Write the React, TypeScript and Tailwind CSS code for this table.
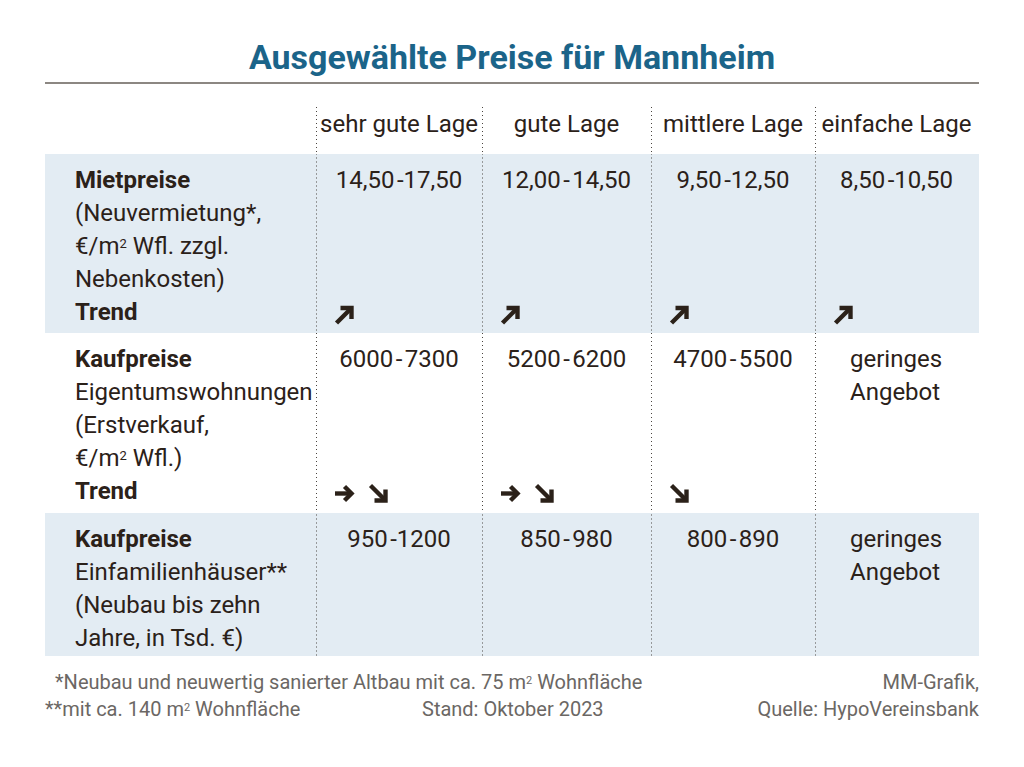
import React from "react";

type Dir = "ne" | "e" | "se";

function Arrow({ dir }: { dir: Dir }) {
  const paths: Record<Dir, { line: string; head: string }> = {
    ne: { line: "M2.5 19 L16.5 5", head: "M6.5 4 L17.5 4 L17.5 15" },
    e: { line: "M1 10.5 L17.5 10.5", head: "M10.5 3.5 L17.5 10.5 L10.5 17.5" },
    se: { line: "M2.5 2.5 L16.5 16.5", head: "M17.5 6.5 L17.5 17.5 L6.5 17.5" },
  };
  const p = paths[dir];
  return (
    <svg width="21" height="21" viewBox="0 0 21 21" fill="none" className="shrink-0">
      <path d={p.line} stroke="#2b2119" strokeWidth="4.4" />
      <path d={p.head} stroke="#2b2119" strokeWidth="4.4" strokeLinejoin="miter" />
    </svg>
  );
}

const dotted =
  "bg-[linear-gradient(to_bottom,#4a4540_1.4px,transparent_1.4px)] bg-[length:1.4px_4px] bg-repeat-y bg-left";

const columns = ["sehr gute Lage", "gute Lage", "mittlere Lage", "einfache Lage"];

type Cell = { value?: string; lines?: string[]; trend?: Dir[] };

type Row = {
  shaded: boolean;
  height: string;
  label: React.ReactNode;
  cells: Cell[];
};

const rows: Row[] = [
  {
    shaded: true,
    height: "h-[179px]",
    label: (
      <>
        <p className="font-bold">Mietpreise</p>
        <p>(Neuvermietung*,</p>
        <p>
          €/m<sup className="text-[13px]">2</sup> Wfl. zzgl.
        </p>
        <p>Nebenkosten)</p>
        <p className="font-bold">Trend</p>
      </>
    ),
    cells: [
      { value: "14,50\u200A-17,50", trend: ["ne"] },
      { value: "12,00\u200A-\u200A14,50", trend: ["ne"] },
      { value: "9,50\u200A-12,50", trend: ["ne"] },
      { value: "8,50\u200A-10,50", trend: ["ne"] },
    ],
  },
  {
    shaded: false,
    height: "h-[180px]",
    label: (
      <>
        <p className="font-bold">Kaufpreise</p>
        <p>Eigentumswohnungen</p>
        <p>(Erstverkauf,</p>
        <p>
          €/m<sup className="text-[13px]">2</sup> Wfl.)
        </p>
        <p className="font-bold">Trend</p>
      </>
    ),
    cells: [
      { value: "6000\u200A-\u200A7300", trend: ["e", "se"] },
      { value: "5200\u200A-\u200A6200", trend: ["e", "se"] },
      { value: "4700\u200A-\u200A5500", trend: ["se"] },
      { lines: ["geringes", "Angebot"] },
    ],
  },
  {
    shaded: true,
    height: "h-[143px]",
    label: (
      <>
        <p className="font-bold">Kaufpreise</p>
        <p>Einfamilienhäuser**</p>
        <p>(Neubau bis zehn</p>
        <p>Jahre, in Tsd. €)</p>
      </>
    ),
    cells: [
      { value: "950\u200A-1200" },
      { value: "850\u200A-\u200A980" },
      { value: "800\u200A-\u200A890" },
      { lines: ["geringes", "Angebot"] },
    ],
  },
];

const grid = "grid grid-cols-[271px_166px_169px_164px_163px]";

export default function App() {
  return (
    <div
      className="h-[767px] w-[1024px] bg-white text-[#2b2119]"
      style={{ fontFamily: "Roboto, 'Liberation Sans', sans-serif" }}
    >
      <h1 className="pt-[37px] text-center text-[34px] font-bold leading-[40px] text-[#1b6489]">
        Ausgewählte Preise für Mannheim
      </h1>
      <div className="mx-[45px] mt-[5px] h-[2px] bg-[#8c8782]" />

      <div className="mx-[45px] mt-[15px]">
        <div className={`${grid} h-[55px]`}>
          <div />
          {columns.map((c) => (
            <div key={c} className={`${dotted} mt-[5px] flex items-start justify-center pt-[4px] text-[24px] leading-[33px]`}>
              {c}
            </div>
          ))}
        </div>

        {rows.map((row, i) => (
          <div key={i} className={`${grid} ${row.height} ${row.shaded ? "bg-[#e3ecf3]" : "bg-white"}`}>
            <div className="pl-[30px] pt-[10px] text-[24px] leading-[33px]">{row.label}</div>
            {row.cells.map((cell, j) => (
              <div key={j} className={`${dotted} flex flex-col pt-[10px] text-[24px] leading-[33px]`}>
                {cell.value && <p className="text-center">{cell.value}</p>}
                {cell.lines && (
                  <div className="pl-[35px]">
                    {cell.lines.map((l) => (
                      <p key={l}>{l}</p>
                    ))}
                  </div>
                )}
                {cell.trend && (
                  <div className="mt-[99px] flex h-[33px] items-center gap-[13px] pl-[18px] pt-[4px]">
                    {cell.trend.map((d, k) => (
                      <Arrow key={k} dir={d} />
                    ))}
                  </div>
                )}
              </div>
            ))}
          </div>
        ))}

        <div className="mt-[13px] flex justify-between text-[20px] leading-[27px] text-[#6b6764]">
          <div>
            <p className="pl-[10px]">
              *Neubau und neuwertig sanierter Altbau mit ca. 75 m<sup className="text-[11px]">2</sup> Wohnfläche
            </p>
            <p className="flex">
              <span className="w-[377px]">
                **mit ca. 140 m<sup className="text-[11px]">2</sup> Wohnfläche
              </span>
              <span>Stand: Oktober 2023</span>
            </p>
          </div>
          <div className="text-right">
            <p>MM-Grafik,</p>
            <p>Quelle: HypoVereinsbank</p>
          </div>
        </div>
      </div>
    </div>
  );
}
